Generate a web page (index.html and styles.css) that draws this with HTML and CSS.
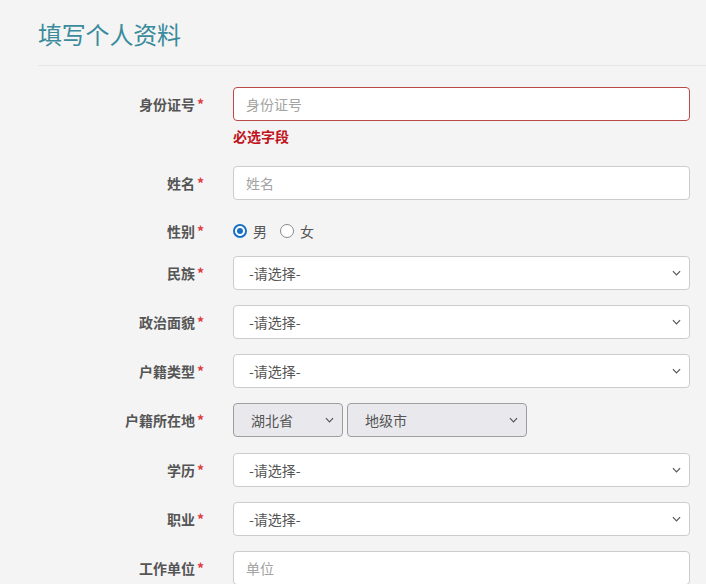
FILE: index.html
```html
<!DOCTYPE html>
<html lang="zh">
<head>
<meta charset="utf-8">
<title>填写个人资料</title>
<link rel="stylesheet" href="styles.css">
</head>
<body>
<div class="page">
  <h1 class="title">填写个人资料</h1>
  <hr class="divider">
  <form class="form">
    <div class="row row-error">
      <label class="label">身份证号<span class="req">*</span></label>
      <div class="control">
        <input class="input input-error" type="text" placeholder="身份证号">
        <div class="error-msg">必选字段</div>
      </div>
    </div>
    <div class="row">
      <label class="label">姓名<span class="req">*</span></label>
      <div class="control"><input class="input" type="text" placeholder="姓名"></div>
    </div>
    <div class="row row-radio">
      <label class="label">性别<span class="req">*</span></label>
      <div class="control radios">
        <span class="radio"><span class="dot checked"></span>男</span>
        <span class="radio"><span class="dot"></span>女</span>
      </div>
    </div>
    <div class="row">
      <label class="label">民族<span class="req">*</span></label>
      <div class="control"><div class="select"><span>-请选择-</span><svg class="chev" viewBox="0 0 10 6"><path d="M1 1l4 4 4-4"/></svg></div></div>
    </div>
    <div class="row">
      <label class="label">政治面貌<span class="req">*</span></label>
      <div class="control"><div class="select"><span>-请选择-</span><svg class="chev" viewBox="0 0 10 6"><path d="M1 1l4 4 4-4"/></svg></div></div>
    </div>
    <div class="row">
      <label class="label">户籍类型<span class="req">*</span></label>
      <div class="control"><div class="select"><span>-请选择-</span><svg class="chev" viewBox="0 0 10 6"><path d="M1 1l4 4 4-4"/></svg></div></div>
    </div>
    <div class="row row-place">
      <label class="label">户籍所在地<span class="req">*</span></label>
      <div class="control pair">
        <div class="select grey prov"><span>湖北省</span><svg class="chev" viewBox="0 0 10 6"><path d="M1 1l4 4 4-4"/></svg></div>
        <div class="select grey city"><span>地级市</span><svg class="chev" viewBox="0 0 10 6"><path d="M1 1l4 4 4-4"/></svg></div>
      </div>
    </div>
    <div class="row">
      <label class="label">学历<span class="req">*</span></label>
      <div class="control"><div class="select"><span>-请选择-</span><svg class="chev" viewBox="0 0 10 6"><path d="M1 1l4 4 4-4"/></svg></div></div>
    </div>
    <div class="row">
      <label class="label">职业<span class="req">*</span></label>
      <div class="control"><div class="select"><span>-请选择-</span><svg class="chev" viewBox="0 0 10 6"><path d="M1 1l4 4 4-4"/></svg></div></div>
    </div>
    <div class="row">
      <label class="label">工作单位<span class="req">*</span></label>
      <div class="control"><input class="input" type="text" placeholder="单位"></div>
    </div>
  </form>
</div>
</body>
</html>
```
FILE: styles.css
```css
html, body {
  margin: 0;
  padding: 0;
  background: #f4f4f4;
  font-family: "Noto Sans CJK SC", "Noto Sans", sans-serif;
  font-size: 14px;
  color: #555;
}
.page {
  padding-left: 38px;
  overflow: hidden;
}
.title {
  margin: 19px 0 0 0;
  font-size: 24px;
  line-height: 30px;
  font-weight: normal;
  color: #3a8b9c;
  letter-spacing: -0.2px;
}
.divider {
  border: 0;
  border-top: 1px solid #e6e6e6;
  margin: 16px 0 0 0;
  height: 0;
}
.form {
  padding-top: 21px;
}
.row {
  display: grid;
  grid-template-columns: 166px 457px;
  column-gap: 29px;
  align-items: start;
  margin-bottom: 15px;
}
.label {
  text-align: right;
  font-weight: bold;
  color: #555;
  line-height: 34px;
  height: 34px;
}
.req {
  color: #e0393e;
  font-weight: bold;
  margin-left: 2px;
}
.input {
  box-sizing: border-box;
  width: 100%;
  height: 34px;
  border: 1px solid #ccc;
  border-radius: 4px;
  background: #fff;
  padding: 0 12px;
  font-family: inherit;
  font-size: 14px;
  color: #555;
  outline: none;
  display: block;
}
.input::placeholder {
  color: #a3a3a3;
}
.input-error {
  border-color: #b94a48;
}
.error-msg {
  color: #c0151d;
  font-weight: bold;
  font-size: 14px;
  line-height: 20px;
  margin-top: 5px;
}
.row-error {
  margin-bottom: 20px;
}
.row-radio {
  margin-top: 21px;
  margin-bottom: 15px;
}
.row-radio .label {
  height: 20px;
  line-height: 20px;
}
.row-place {
  margin-bottom: 16px;
}
.radios {
  display: flex;
  align-items: center;
  gap: 13px;
  height: 20px;
}
.radio {
  display: flex;
  align-items: center;
  gap: 6px;
  color: #555;
  font-size: 14px;
}
.dot {
  box-sizing: border-box;
  width: 14px;
  height: 14px;
  border-radius: 50%;
  border: 1.5px solid #8a8a8a;
  background: #fff;
  position: relative;
}
.dot.checked {
  border: 2px solid #1a6fc4;
}
.dot.checked::after {
  content: "";
  position: absolute;
  left: 2px;
  top: 2px;
  width: 6px;
  height: 6px;
  border-radius: 50%;
  background: #1a6fc4;
}
.select {
  box-sizing: border-box;
  height: 34px;
  border: 1px solid #ccc;
  border-radius: 4px;
  background: #fff;
  display: flex;
  align-items: center;
  justify-content: space-between;
  padding: 0 8px 0 15px;
  color: #555;
  font-size: 14px;
}
.chev {
  width: 9px;
  height: 6px;
  fill: none;
  stroke: #555;
  stroke-width: 1.3;
}
.pair {
  display: flex;
  gap: 4px;
}
.select.grey {
  background: #e9e9ed;
  border-color: #9e9e9e;
}
.prov { width: 110px; }
.city { width: 180px; }
.pair .select { padding-left: 17px; }
```
